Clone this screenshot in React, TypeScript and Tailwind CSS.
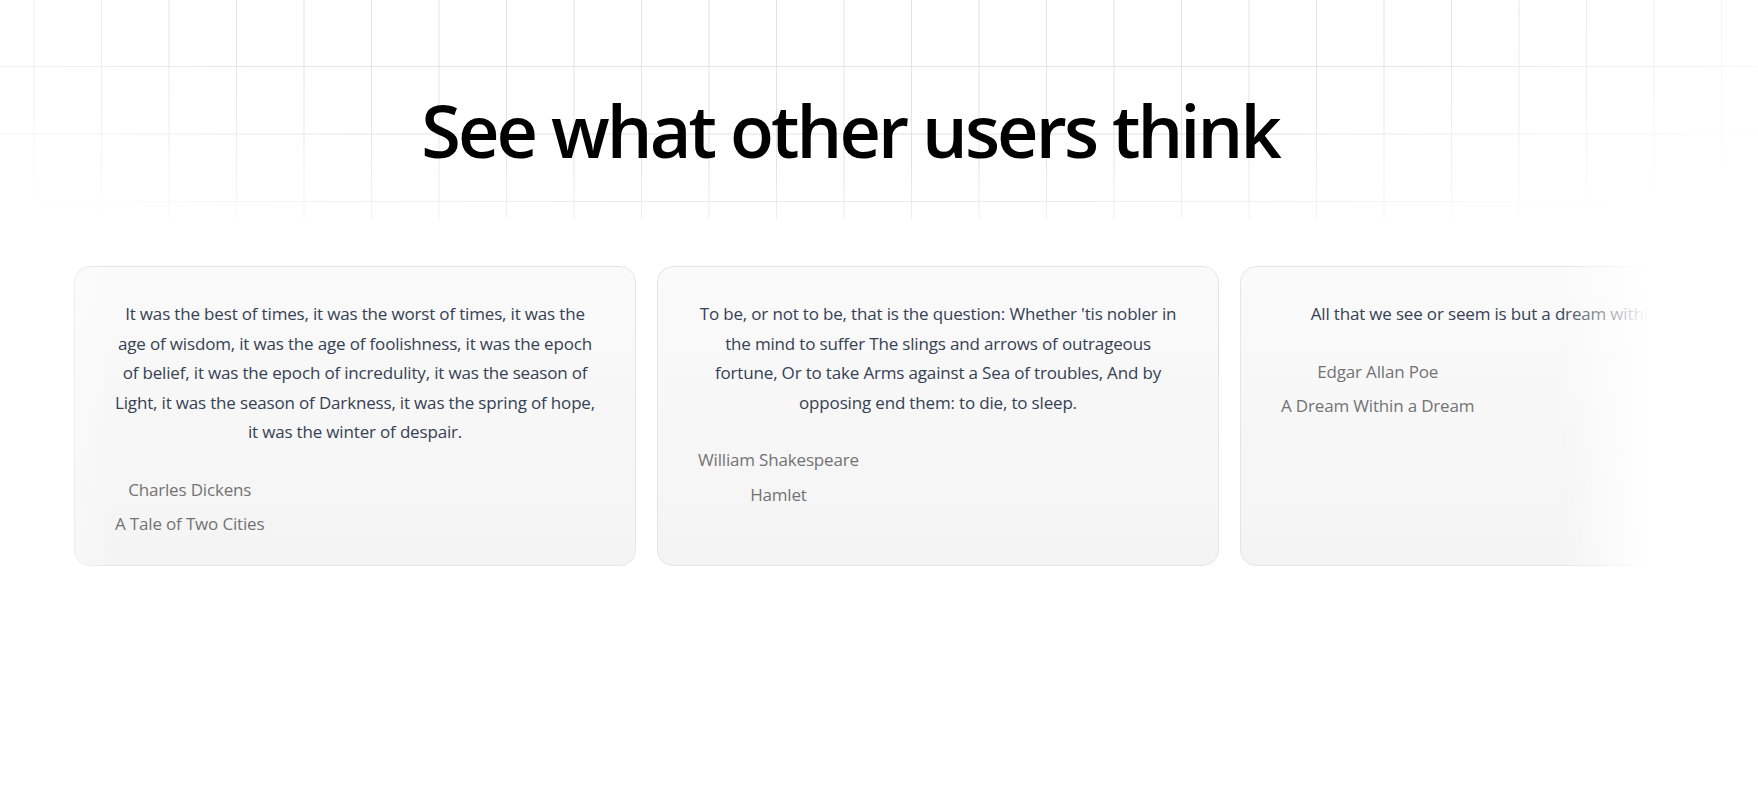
type Quote = {
  text: string;
  author: string;
  work: string;
};

const quotes: Quote[] = [
  {
    text: "It was the best of times, it was the worst of times, it was the age of wisdom, it was the age of foolishness, it was the epoch of belief, it was the epoch of incredulity, it was the season of Light, it was the season of Darkness, it was the spring of hope, it was the winter of despair.",
    author: "Charles Dickens",
    work: "A Tale of Two Cities",
  },
  {
    text: "To be, or not to be, that is the question: Whether 'tis nobler in the mind to suffer The slings and arrows of outrageous fortune, Or to take Arms against a Sea of troubles, And by opposing end them: to die, to sleep.",
    author: "William Shakespeare",
    work: "Hamlet",
  },
  {
    text: "All that we see or seem is but a dream within a dream.",
    author: "Edgar Allan Poe",
    work: "A Dream Within a Dream",
  },
];

const QuoteCard = ({ text, author, work }: Quote) => (
  <div className="w-[562px] shrink-0 rounded-2xl border border-neutral-200 bg-gradient-to-b from-neutral-50 to-[#f4f4f5] px-10 pt-8 pb-[26px]">
    <p className="text-center text-[17px] leading-[29.5px] tracking-[-0.01em] text-gray-700">
      {text}
    </p>
    <div className="mt-[28px] flex w-fit flex-col items-center gap-[5px] text-[17px] leading-[29.5px] tracking-[-0.01em] text-neutral-500">
      <span>{author}</span>
      <span>{work}</span>
    </div>
  </div>
);

export default function App() {
  return (
    <div
      className="min-h-screen bg-white"
      style={{ fontFamily: '"Open Sans", "Noto Sans", sans-serif' }}
    >
      <section className="relative h-[219px]">
        <div className="pointer-events-none absolute inset-0 bg-[linear-gradient(to_right,#e4e4e7_1px,transparent_1px),linear-gradient(to_bottom,#e4e4e7_1px,transparent_1px)] bg-[size:67.5px_67.5px] bg-[position:33.5px_66px] [mask-image:radial-gradient(ellipse_62%_140%_at_47%_0%,black_55%,transparent_100%)]" />
        <div className="relative flex h-full items-center justify-center pt-10 pr-[58px]">
          <h1 className="text-[72px] font-semibold leading-none tracking-[-0.04em] text-black">
            See what other users think
          </h1>
        </div>
      </section>

      <div className="relative mt-[47px] overflow-hidden">
        <div className="flex gap-[21px] pl-[74px]">
          {quotes.map((q) => (
            <QuoteCard key={q.author} {...q} />
          ))}
        </div>
        <div className="pointer-events-none absolute inset-y-0 left-0 w-[112px] bg-gradient-to-r from-white to-transparent" />
        <div className="pointer-events-none absolute inset-y-0 right-0 w-[198px] bg-gradient-to-l from-white from-55% to-transparent" />
      </div>
    </div>
  );
}
